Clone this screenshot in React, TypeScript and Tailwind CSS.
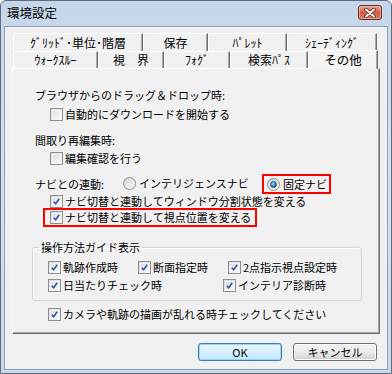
import React from 'react'

const font = "font-['Noto_Sans_CJK_JP','Noto_Sans_CJK_SC',sans-serif]"

const CheckBox = ({ checked, label }: { checked?: boolean; label: string }) => (
  <span className="inline-flex items-center gap-[2px]">
    <span className="w-[13px] h-[13px] border border-[#8e8f8f] bg-gradient-to-br from-[#d8d8d8] to-[#fbfbfb] p-px flex items-center justify-center shrink-0">
      <span className="w-full h-full border border-[#f4f4f4] bg-gradient-to-br from-[#dedede] to-[#f7f7f7] flex items-center justify-center">
        {checked && (
          <svg width="9" height="9" viewBox="0 0 9 9">
            <path d="M1 4.8 L3.4 7.4 L8 1" fill="none" stroke="#2f55a8" strokeWidth="2" />
          </svg>
        )}
      </span>
    </span>
    <span className="whitespace-nowrap">{label}</span>
  </span>
)

const Radio = ({ checked, label }: { checked?: boolean; label: string }) => (
  <span className="inline-flex items-center gap-[3px]">
    <span className="w-[13px] h-[13px] rounded-full border border-[#8e8f8f] bg-gradient-to-br from-[#d4d4d4] to-[#fafafa] flex items-center justify-center shrink-0">
      {checked && (
        <span className="w-[7px] h-[7px] rounded-full bg-[radial-gradient(circle_at_40%_35%,#a6dcf7,#1b6db3_70%,#0f4f8a)] border border-[#1a4f7e]" />
      )}
    </span>
    <span className="whitespace-nowrap">{label}</span>
  </span>
)

const Tab = ({ label, w }: { label: string; w: string }) => (
  <div className={`${w} h-full flex items-center justify-center border-t border-l border-white border-r border-r-[#6e6e6e] shadow-[inset_-1px_0_0_#a8a8a8] bg-[#f0f0f0] rounded-tl-[2px] text-[12px]`}>
    <span className="whitespace-nowrap">{label}</span>
  </div>
)

export default function App() {
  return (
    <div className={`${font} text-[11px] leading-none text-black w-[392px] h-[374px] flex flex-col border border-[#5c6b7e] rounded-t-[6px] bg-gradient-to-b from-[#c6d6ea] via-[#d4e1f0] to-[#c9d8eb]`}>
      {/* title bar */}
      <div className="h-[25px] flex items-start justify-between pl-[6px] pr-[9px] shrink-0">
        <span className="text-[12.5px] mt-[6px]">環境設定</span>
        <div className="mt-[4px] w-[24px] h-[15px] rounded-[3px] border border-[#6b2a22] bg-gradient-to-b from-[#e9a898] via-[#cf5b47] to-[#d67a62] shadow-[inset_0_0_0_1px_rgba(255,210,200,0.5)] flex items-center justify-center">
          <svg width="12" height="10" viewBox="0 0 12 10">
            <path d="M2 1.5 L10 8.5 M10 1.5 L2 8.5" stroke="#5a1a12" strokeWidth="3.6" strokeLinecap="round" />
            <path d="M2 1.5 L10 8.5 M10 1.5 L2 8.5" stroke="#ffffff" strokeWidth="2" strokeLinecap="round" />
          </svg>
        </div>
      </div>

      {/* client area */}
      <div className="mx-[3px] h-[344px] border border-[#8b9fb7] bg-[#f0f0f0] flex flex-col px-[7px] shrink-0">
        {/* tab rows */}
        <div className="mt-[6px] ml-px flex h-[18px]">
          <Tab label="ｸﾞﾘｯﾄﾞ･単位･階層" w="w-[130px]" />
          <Tab label="保存" w="w-[65px]" />
          <Tab label="ﾊﾟﾚｯﾄ" w="w-[79px]" />
          <Tab label="ｼｪｰﾃﾞｨﾝｸﾞ" w="w-[90px]" />
        </div>
        <div className="ml-px flex items-end h-[17px]">
          <Tab label="ｳｫｰｸｽﾙｰ" w="w-[85px]" />
          <Tab label="視　界" w="w-[66px]" />
          <Tab label="ﾌｫｸﾞ" w="w-[66px]" />
          <Tab label="検索ﾊﾟｽ" w="w-[78px]" />
          <div className="relative z-10 w-[70px] h-[19px] -mb-px flex items-start justify-center pt-[3px] border-t border-l border-white border-r border-r-[#6e6e6e] shadow-[inset_-1px_0_0_#a8a8a8] bg-[#f3f3f3] text-[12.5px]">
            その他
          </div>
        </div>

        {/* panel */}
        <div className="h-[266px] border-t border-l border-white border-r border-r-[#6e6e6e] border-b border-b-[#6e6e6e] shadow-[inset_-1px_-1px_0_#a8a8a8] bg-[#f0f0f0] flex flex-col pl-[22px]">
          <div className="mt-[17px] h-[18px] flex items-center">ブラウザからのドラッグ＆ドロップ時:</div>
          <div className="mt-px h-[18px] flex items-center pl-[15px]">
            <CheckBox label="自動的にダウンロードを開始する" />
          </div>
          <div className="mt-[8px] h-[18px] flex items-center">間取り再編集時:</div>
          <div className="h-[18px] flex items-center pl-[15px]">
            <CheckBox label="編集確認を行う" />
          </div>

          <div className="mt-[7px] h-[20px] flex items-center">
            <span className="w-[88px]">ナビとの連動:</span>
            <span className="w-[139px]">
              <Radio label="インテリジェンスナビ" />
            </span>
            <span className="h-[20px] border-2 border-[#ff0000] flex items-center pl-[3px] pr-[2px]">
              <Radio checked label="固定ナビ" />
            </span>
          </div>
          <div className="h-[14px] flex items-center pl-[15px]">
            <CheckBox checked label="ナビ切替と連動してウィンドウ分割状態を変える" />
          </div>
          <div className="h-[19px] flex">
            <span className="ml-[8px] border-2 border-[#ff0000] flex items-center pl-[5px] pr-[4px]">
              <CheckBox checked label="ナビ切替と連動して視点位置を変える" />
            </span>
          </div>

          <fieldset className="mt-[11px] -ml-[3px] w-[330px] border border-[#cdd7de] rounded-[3px] pb-[6px] shadow-[inset_1px_1px_0_#ffffff]">
            <legend className="ml-[6px] px-[2px] h-[18px] leading-[18px]">操作方法ガイド表示</legend>
            <div className="mt-[2px] h-[18px] flex items-center pl-[15px]">
              <span className="w-[90px]"><CheckBox checked label="軌跡作成時" /></span>
              <span className="w-[90px]"><CheckBox checked label="断面指定時" /></span>
              <CheckBox checked label="2点指示視点設定時" />
            </div>
            <div className="h-[18px] flex items-center pl-[15px]">
              <span className="w-[175px]"><CheckBox checked label="日当たりチェック時" /></span>
              <CheckBox checked label="インテリア診断時" />
            </div>
          </fieldset>

          <div className="mt-[4px] h-[18px] flex items-center pl-[13px]">
            <CheckBox checked label="カメラや軌跡の描画が乱れる時チェックしてください" />
          </div>
        </div>

        {/* buttons */}
        <div className="mt-[9px] flex justify-end gap-[11px] pr-[3px]">
          <button className="w-[84px] h-[18px] rounded-[3px] border border-[#3c7fb1] bg-gradient-to-b from-[#eaf6fd] via-[#d9f0fc] to-[#bee6fd] shadow-[inset_0_0_0_1px_#9cd4f3] flex items-center justify-center">
            OK
          </button>
          <button className="w-[84px] h-[18px] rounded-[3px] border border-[#707070] bg-gradient-to-b from-[#f2f2f2] via-[#ebebeb] to-[#cfcfcf] shadow-[inset_0_0_0_1px_#fcfcfc] flex items-center justify-center">
            キャンセル
          </button>
        </div>
      </div>
    </div>
  )
}
